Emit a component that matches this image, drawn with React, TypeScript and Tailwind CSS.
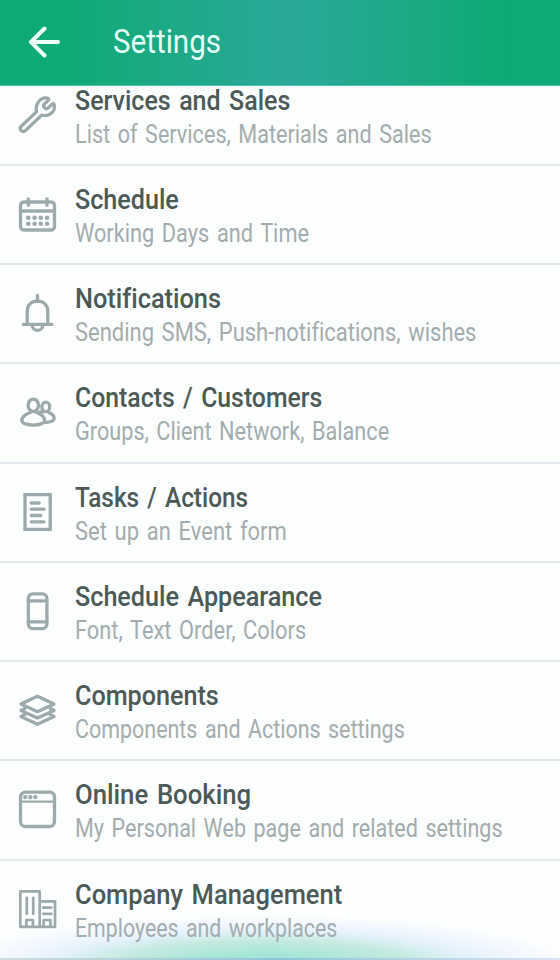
import React from "react";
import clsx from "clsx";

interface SettingsItemProps {
  item: {
    title: string;
    subtitle: string;
    icon: React.ReactNode;
    titleFit: string;
    subtitleFit: string;
  };
}

const items: SettingsItemProps["item"][] = [
  {
    title: "Services and Sales",
    subtitle: "List of Services, Materials and Sales",
    titleFit: "scale-x-[0.893]",
    subtitleFit: "scale-x-[0.865]",
    icon: (
      <path d="M4.2 32.2c-1.3-1.4-1.2-3 0-4.2L19.6 13.2C17.8 5.2 24-2 30.8-.2c1.2.4 1.2 1.3.5 2l-4.2 4c-1.9 2 1.8 5.8 4 3.8l4.2-4c.8-.7 1.6-.4 1.9.6 1.6 7.2-5 12.4-12.6 10.6L8.6 32c-1.3 1.3-3 1.5-4.4.2Z" transform="translate(0 -.6)" />
    ),
  },
  {
    title: "Schedule",
    subtitle: "Working Days and Time",
    titleFit: "scale-x-[0.898]",
    subtitleFit: "scale-x-[0.87]",
    icon: (
      <>
        <rect x="3.5" y="4" width="34" height="28" rx="3.5" />
        <path d="M3.5 13h34M11.3 .8v6.5M30 .8v6.5" />
        <path d="M11.3 19.7h.01M17.6 19.7h.01M23.8 19.7h.01M30 19.7h.01M11.3 25.8h.01M17.6 25.8h.01M23.8 25.8h.01M30 25.8h.01" strokeWidth="4.6" />
      </>
    ),
  },
  {
    title: "Notifications",
    subtitle: "Sending SMS, Push-notifications, wishes",
    titleFit: "scale-x-[0.905]",
    subtitleFit: "scale-x-[0.878]",
    icon: (
      <>
        <path d="M20.5-1.5v5.5M6.3 27.3h28.6M10.2 26.5V14.8C10.2 7.8 14.5 4.2 20.5 4.2s10.3 3.6 10.3 10.6v12" />
        <path d="M15.2 28.3c.5 6.8 10.1 6.8 10.6 0" />
      </>
    ),
  },
  {
    title: "Contacts / Customers",
    subtitle: "Groups, Client Network, Balance",
    titleFit: "scale-x-[0.886]",
    subtitleFit: "scale-x-[0.867]",
    icon: (
      <>
        <ellipse cx="16.3" cy="9.3" rx="5.2" ry="6.2" />
        <path d="M13.8 16.3C8.4 18.3 4.8 21.5 4.8 24.6c0 5.9 22.9 5.9 22.9 0 0-3.1-3.4-6.3-8.6-8.3" />
        <ellipse cx="28.8" cy="10.9" rx="3.9" ry="4.8" />
        <path d="M23.2 15.9c1.2.4 2.5 0 3.9-.4M30.6 15.7c4 1.7 6.6 4 6.6 6.5 0 2.4-4 4.3-9.5 4.2" />
      </>
    ),
  },
  {
    title: "Tasks / Actions",
    subtitle: "Set up an Event form",
    titleFit: "scale-x-[0.869]",
    subtitleFit: "scale-x-[0.88]",
    icon: (
      <>
        <rect x="8" y="-1.4" width="25.2" height="34.8" strokeLinejoin="miter" />
        <path d="M14.2 7h8M14.2 13.2h12.8M14.2 19.5h9.6M14.2 25.8h12.8" />
      </>
    ),
  },
  {
    title: "Schedule Appearance",
    subtitle: "Font, Text Order, Colors",
    titleFit: "scale-x-[0.899]",
    subtitleFit: "scale-x-[0.873]",
    icon: (
      <>
        <rect x="11.3" y="-1.2" width="18.6" height="34.8" rx="4.5" />
        <path d="M11.3 5.8h18.6M11.3 26.8h18.6" />
      </>
    ),
  },
  {
    title: "Components",
    subtitle: "Components and Actions settings",
    titleFit: "scale-x-[0.898]",
    subtitleFit: "scale-x-[0.858]",
    icon: (
      <>
        <path d="M20.5 2.3L37 10 20.5 17.7 4 10Z" />
        <path d="M7.8 14.6L4 16.4l16.5 7.7L37 16.4l-3.8-1.8M7.8 20.8L4 22.6l16.5 7.7L37 22.6l-3.8-1.8" />
      </>
    ),
  },
  {
    title: "Online Booking",
    subtitle: "My Personal Web page and related settings",
    titleFit: "scale-x-[0.918]",
    subtitleFit: "scale-x-[0.863]",
    icon: (
      <>
        <rect x="3.5" y="-.8" width="34" height="34.3" rx="5" />
        <path d="M3.5 8.7h34" strokeWidth="2.2" />
        <path d="M8.2 4.1h.01M13.3 4.1h.01M18.3 4.1h.01" strokeWidth="4.4" />
      </>
    ),
  },
  {
    title: "Company Management",
    subtitle: "Employees and workplaces",
    titleFit: "scale-x-[0.91]",
    subtitleFit: "scale-x-[0.853]",
    icon: (
      <g strokeWidth="2.7">
        <path d="M3.3 33.8V-1.6h19.4v35.4ZM22.7 8.3H38v25.5H22.7M9.3 33v-6h6.6v6M26.6 33v-6h6.8v6" />
        <path d="M9.8 4.8v16M16.2 4.8v16M26.3 14.6h8M26.3 20.8h8" />
      </g>
    ),
  },
];

const SettingsItem: React.FC<SettingsItemProps> = ({ item }) => {
  return (
    <li className="flex h-[99.25px] shrink-0 border-b-2 border-[#e5e9ef]">
      <svg
        viewBox="0 -4 42 42"
        className="ml-[17px] mt-[28px] size-[42px] shrink-0 overflow-visible fill-none stroke-[#9caaab] stroke-[3.3]"
        strokeLinecap="round"
        strokeLinejoin="round"
      >
        {item.icon}
      </svg>
      <div className="ml-4 flex flex-col items-start pt-[17px] whitespace-nowrap [font-variant-ligatures:none] [word-spacing:2.5px]">
        <p className={clsx("origin-left text-[28px] leading-[34px] font-medium text-[#4c5a57]", item.titleFit)}>
          {item.title}
        </p>
        <p className={clsx("origin-left text-[25px] leading-[33px] text-[#a3adae]", item.subtitleFit)}>
          {item.subtitle}
        </p>
      </div>
    </li>
  );
};

export default function App() {
  return (
    <div className="relative flex h-[960px] w-[560px] flex-col overflow-hidden bg-[#fdfefe] font-['Roboto','Liberation_Sans',sans-serif]">
      {/* glow under the last row */}
      <div className="absolute inset-x-0 bottom-0 h-[46px] bg-[radial-gradient(310px_50px_at_47%_110%,#a5e5d8_20%,#c5eae0_48%,#e3f1fb_66%,#f2f7ff_82%,transparent)]" />
      <header className="relative z-10 flex h-[86px] shrink-0 items-center border-b border-[#56c3b0] bg-linear-to-r from-[#0daa76] from-12% via-[#2aa899] via-52% to-[#0daa76] to-88%">
        <svg viewBox="0 0 32 32" className="-mt-[2px] ml-7 size-8 fill-none stroke-[#effffa] stroke-[4]" strokeLinecap="round" strokeLinejoin="round">
          <path d="M30 16H3M16.5 2.5L3 16l13.5 13.5" />
        </svg>
        <h1 className="-mt-[2px] ml-[53px] origin-left scale-x-[0.897] text-[33px] text-[#e3fff7]">Settings</h1>
      </header>
      <ul className="relative -mt-[19.5px] flex flex-col">
        {items.map((item) => (
          <SettingsItem key={item.title} item={item} />
        ))}
      </ul>
      <div className="absolute inset-x-0 bottom-0 h-[2px] bg-linear-to-r from-[#cfdcdc] via-[#8fc4d8] to-[#dbe3f2]" />
    </div>
  );
}
